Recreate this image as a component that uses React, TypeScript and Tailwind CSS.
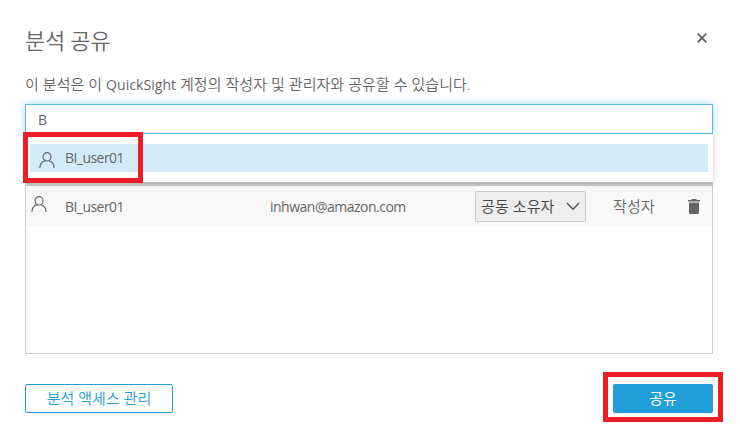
function UserIcon() {
  return (
    <svg className="block h-4 w-4 shrink-0" viewBox="0 0 16 16" fill="none" stroke="#666" strokeWidth="1.2">
      <ellipse cx="8" cy="4.8" rx="4" ry="4.2" />
      <path d="M.9 16c0-3.8 1.9-6.4 5-7.2M15.1 16c0-3.8-1.9-6.4-5-7.2" />
    </svg>
  );
}

export default function App() {
  return (
    <main className="flex h-[435px] w-[740px] flex-col overflow-hidden bg-white px-[25px] pr-[27px] font-['Open_Sans','Noto_Sans_CJK_KR',sans-serif] text-[14px] leading-5 text-[#666]">
      <header className="flex h-[74px] shrink-0 justify-between pt-[25px]">
        <h1 className="text-[22px] leading-[30px] font-[350] tracking-[-0.3px]">분석 공유</h1>
        <button aria-label="닫기" className="mt-[8px] mr-[6px] h-[10px] w-[10px]">
          <svg className="block" width="10" height="10" viewBox="0 0 10 10" stroke="#606060" strokeWidth="1.8">
            <path d="M.7.7l8.6 8.6M9.3.7L.7 9.3" />
          </svg>
        </button>
      </header>
      <p className="h-[30px] shrink-0 text-[15px] font-[350] tracking-[0.05px] whitespace-nowrap">
        이 분석은 이 <span className="text-[14px] font-normal">QuickSight</span> 계정의 작성자 및 관리자와 공유할 수 있습니다.
      </p>
      <div className="flex h-[30px] shrink-0 items-center border border-[#5bb8e0] bg-white pt-px pl-3 shadow-[0_0_8px_#a6daf1]"><span>B</span></div>
      <div className="relative z-10 h-12 shrink-0 bg-white px-[5px] pt-[10px] shadow-[1px_2px_4px_rgba(0,0,0,0.15)]">
        <div className="flex h-7 items-center bg-[#d3ebf7] pl-[9px] tracking-[-0.55px]">
          <span className="mt-[4px]"><UserIcon /></span>
          <span className="ml-[10px]">BI_user01</span>
        </div>
        <div className="absolute -top-0.5 -left-0.5 h-[51px] w-[120px] border-[5px] border-[#ee1c25]" />
      </div>
      <section className="h-[172px] shrink-0 border border-t-4 border-[#ccc]">
        <div className="flex h-[41px] items-center bg-[#f8f8f8]">
          <span className="mb-[5px] ml-[5px]"><UserIcon /></span>
          <span className="ml-[18px] w-[205px] tracking-[-0.55px]">BI_user01</span>
          <span className="w-[205px] tracking-[-0.5px]">inhwan@amazon.com</span>
          <button className="flex h-[31px] w-[111px] shrink-0 items-center justify-between rounded-[2px] border border-[#ccc] bg-[#eee] pr-[5px] pl-[5px] text-[#444]">
            <span className="pb-0.5 text-[15px] font-[350] tracking-[0.1px]">공동 소유자</span>
            <svg width="14" height="9" viewBox="0 0 14 9" fill="none" stroke="#555" strokeWidth="1.4"><path d="M1 1l6 6.3L13 1" /></svg>
          </button>
          <span className="ml-[27px] w-[75px] pb-0.5 text-[15px] font-[350] tracking-[0.2px]">작성자</span>
          <svg className="shrink-0" width="12" height="15" viewBox="0 0 12 15" fill="#666">
            <path d="M4 0h4l1 1h3v1.5H0V1h3zM1 3.5h10v10q0 1.5-1.5 1.5h-7Q1 15 1 13.5z" />
          </svg>
        </div>
      </section>
      <footer className="mt-[30px] flex h-[29px] shrink-0 justify-between">
        <button className="h-[29px] w-[148px] rounded-[2px] border border-[#219fd9] pb-0.5 text-[15px] font-[350] text-[#219fd9]">분석 액세스 관리</button>
        <div className="relative h-[29px] w-[100px]">
          <button className="h-full w-full rounded-[2px] bg-[#219fd9] pb-0.5 text-[15px] text-white">공유</button>
          <div className="absolute -top-3 -left-2.5 h-[50px] w-[120px] border-[5px] border-[#ee1c25]" />
        </div>
      </footer>
    </main>
  );
}
